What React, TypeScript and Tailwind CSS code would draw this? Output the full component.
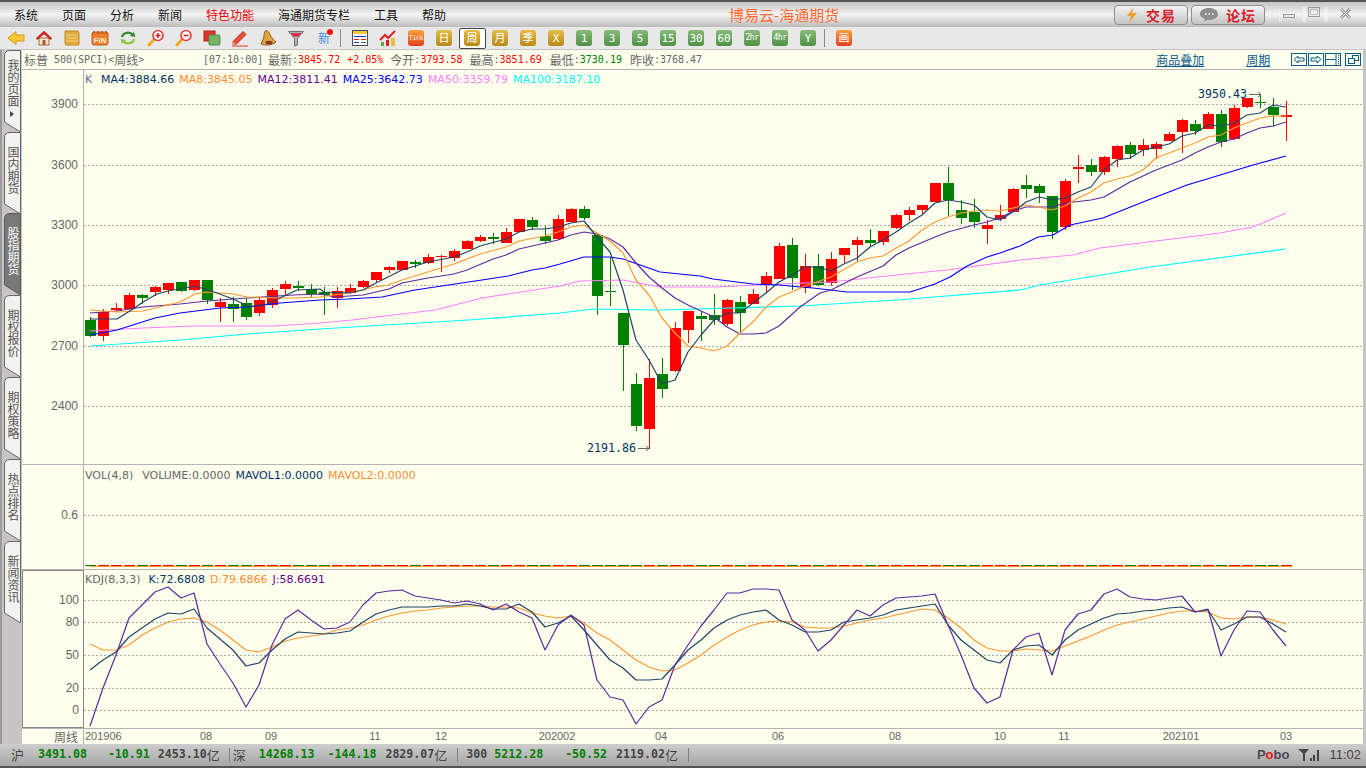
import type { ReactNode } from "react";

const mono = '"DejaVu Sans Mono", "Noto Sans CJK SC", monospace';

// top, bottom, wick top, wick bottom, 1 = red
const candles: number[][] = [
  [320,336,317,337,0],[312,336,309,341,1],[308,310,303,311,1],[295,309,293,309,1],[295,298,294,304,0],
  [287,292,286,296,1],[283,290,283,294,1],[282,291,282,292,0],[280,290,280,291,1],[280,300,280,304,0],
  [302,307,298,322,1],[304,309,297,322,0],[303,317,298,320,0],[300,313,297,316,1],[290,305,288,308,1],
  [284,289,281,295,1],[286,288,281,291,0],[289,294,284,297,0],[292,295,287,315,0],[291,298,287,308,1],
  [288,293,284,294,1],[281,287,280,288,1],[272,280,272,282,1],[267,270,266,273,1],[261,270,261,270,1],
  [262,264,260,268,0],[257,263,254,264,1],[256,257,255,272,1],[251,258,249,261,1],[241,249,240,249,1],
  [237,241,235,242,1],[237,239,233,244,0],[232,243,228,243,1],[219,232,219,232,1],[220,227,217,230,0],
  [236,241,226,244,0],[219,239,215,240,1],[209,222,208,222,1],[209,218,206,220,0],[235,296,235,315,0],
  [291,292,257,306,0],[313,345,313,391,0],[384,426,373,431,0],[378,429,359,449,1],[374,389,358,398,0],
  [328,371,322,372,1],[311,330,311,343,1],[316,319,311,341,0],[315,320,294,325,0],[300,324,299,326,1],
  [302,313,296,333,0],[294,304,289,304,1],[276,284,272,292,1],[246,279,243,279,1],[245,278,238,290,0],
  [266,288,254,293,1],[266,285,254,286,0],[259,283,252,286,1],[248,255,248,263,1],[240,245,237,261,1],
  [240,243,229,246,0],[231,242,231,245,1],[215,228,214,229,1],[210,215,207,221,1],[205,210,205,215,1],
  [183,202,183,202,1],[183,200,167,216,0],[210,218,200,224,0],[212,222,199,228,0],[225,229,220,244,1],
  [215,219,205,221,1],[189,212,188,212,1],[185,189,175,198,0],[186,193,184,203,0],[196,232,196,239,0],
  [181,227,179,230,1],[167,169,155,183,1],[165,172,159,176,0],[157,172,156,175,1],[146,159,145,167,1],
  [145,154,142,159,0],[145,150,139,156,1],[144,149,142,159,1],[134,141,132,141,1],[120,132,119,153,1],
  [124,131,120,135,0],[114,129,112,129,1],[114,142,110,147,0],[108,139,105,140,1],[98,107,98,108,1],
  [102,103,94,108,0],[107,115,98,127,0],[115,117,101,141,1],
];

const ma4 = "90,319 117,319 133,309 143,302 157,294 168,291 195,286 217,293 233,299 250,307 267,304 280,298 297,290 320,289 324,292 348,293 363,290 376,283 402,270 428,262 454,257 467,252 480,246 506,239 519,232 532,229 545,229 558,227 571,223 584,221 597,237 610,252 623,290 636,340 649,360 662,384 675,380 688,352 701,335 714,320 727,313 740,313 753,303 766,293 779,282 792,275 805,267 818,267 831,271 844,264 857,258 870,247 883,240 896,232 909,223 922,215 935,203 948,200 961,202 974,205 987,217 1000,220 1013,212 1026,202 1039,197 1052,200 1065,198 1078,192 1091,187 1104,170 1117,160 1130,158 1143,150 1156,147 1169,144 1182,136 1195,133 1208,125 1221,126 1234,123 1247,115 1260,113 1273,105 1286,107";
const ma8 = "90,310 117,312 143,311 180,302 195,294 207,292 233,294 247,297 280,298 297,298 320,297 348,293 375,287 388,285 402,280 428,272 454,264 480,254 506,247 519,241 545,236 558,232 571,227 584,225 597,233 610,241 623,253 636,280 649,295 662,318 675,333 688,346 701,348 714,351 727,346 740,333 753,322 766,307 779,297 792,292 805,286 831,277 857,262 870,258 883,256 896,248 909,241 922,230 935,222 948,217 961,213 974,211 987,210 1000,211 1026,205 1039,207 1052,210 1065,206 1078,198 1091,192 1104,183 1117,179 1130,176 1143,170 1156,158 1169,153 1182,148 1195,143 1208,137 1221,135 1234,128 1247,123 1260,118 1273,116 1286,116";
const ma12 = "90,313 117,311 143,307 180,304 207,301 247,298 293,295 320,294 335,297 363,295 389,289 402,283 428,278 454,274 467,270 493,259 506,255 519,249 545,243 558,240 571,235 584,232 597,234 610,239 623,247 636,263 649,277 662,288 675,298 688,305 714,317 727,327 740,334 753,334 766,333 779,326 800,307 810,300 820,293 831,290 857,277 883,266 896,255 909,248 935,237 948,232 974,225 987,222 1000,218 1013,211 1026,207 1052,207 1065,203 1091,200 1104,197 1130,182 1156,170 1182,160 1195,153 1208,147 1221,142 1234,139 1247,133 1260,128 1273,126 1286,122";
const ma25 = "90,335 117,330 155,318 180,313 220,308 247,307 280,303 320,300 348,299 382,297 415,290 455,284 482,280 508,276 532,270 545,268 560,264 584,257 610,257 623,259 660,272 700,276 713,279 753,284 780,285 800,287 813,288 847,292 910,292 935,284 950,277 967,266 987,257 1000,253 1020,246 1038,237 1053,235 1070,225 1103,218 1143,202 1187,185 1207,179 1253,165 1286,156";
const ma50 = "90,331 143,328 193,326 273,326 320,323 352,320 435,310 482,298 560,286 580,281 623,280 660,287 717,287 780,284 830,282 887,276 947,270 1020,260 1073,255 1100,248 1220,233 1253,227 1286,213";
const ma100 = "90,346 180,340 247,334 320,329 468,320 560,313 593,309 660,310 800,306 897,300 1020,290 1040,285 1150,267 1286,249";

const kdjJ = "90,726 103,688 116,655 129,618 142,605 155,592 168,587 181,598 194,593 207,644 220,664 233,683 246,707 259,685 272,645 285,619 298,610 311,620 324,629 337,628 350,622 363,605 376,593 389,591 402,590 415,596 428,598 441,600 454,603 467,601 480,604 493,610 506,604 519,612 532,618 545,650 558,625 571,615 584,625 597,680 610,697 623,700 636,724 649,707 662,700 675,665 688,645 701,626 714,610 727,593 740,593 753,589 766,589 779,590 792,620 805,630 818,651 831,640 844,625 857,610 870,616 883,605 896,598 909,597 922,596 935,594 948,625 961,655 974,688 987,703 1000,697 1013,650 1026,637 1039,633 1052,675 1065,630 1078,614 1091,610 1104,594 1117,589 1130,597 1143,599 1156,600 1169,598 1182,596 1195,612 1208,609 1221,656 1234,630 1247,611 1260,612 1273,630 1286,646";
const kdjK = "90,670 103,660 116,652 129,637 142,628 155,619 168,613 181,614 194,609 207,628 220,639 233,650 246,666 259,663 272,650 285,639 298,632 311,633 324,634 337,633 350,631 363,622 376,614 389,610 402,607 415,607 428,607 441,606 454,606 467,604 480,606 493,609 506,609 519,604 532,612 545,627 558,623 571,616 584,630 597,645 610,660 623,668 636,680 649,680 662,679 675,665 688,650 701,640 714,628 727,620 740,615 753,612 766,610 779,620 792,625 805,632 818,632 831,630 844,622 857,620 870,618 883,615 896,610 909,608 922,606 935,604 948,625 961,640 974,650 987,660 1000,663 1013,650 1026,646 1039,645 1052,655 1065,640 1078,630 1091,624 1104,618 1117,614 1130,613 1143,611 1156,610 1169,608 1182,607 1195,612 1208,610 1221,630 1234,624 1247,617 1260,617 1273,624 1286,632";
const kdjD = "90,644 103,650 116,650 129,645 142,635 155,628 168,622 181,619 194,618 207,622 220,630 233,640 246,650 259,652 272,647 285,641 298,638 311,636 324,634 337,630 350,628 363,625 376,620 389,616 402,613 415,611 428,610 441,608 454,607 467,606 480,606 493,607 506,607 519,608 532,613 545,616 558,618 571,616 584,623 597,633 610,640 623,650 636,660 649,667 662,671 675,670 688,663 701,655 714,645 727,637 740,630 753,625 766,622 779,621 792,622 805,627 818,628 831,628 844,626 857,623 870,620 883,618 896,615 909,612 922,609 935,610 948,618 961,628 974,640 987,648 1000,651 1013,651 1026,649 1039,650 1052,651 1065,646 1078,641 1091,636 1104,630 1117,625 1130,622 1143,619 1156,616 1169,613 1182,611 1195,611 1208,612 1221,618 1234,619 1247,617 1260,617 1273,620 1286,624";

const legendFont = "font-['DejaVu_Sans',sans-serif] text-[11px] leading-[14px] whitespace-nowrap";

function Zh({ children, className = "" }: { children: ReactNode; className?: string }) {
  return <span className={"font-['Noto_Sans_CJK_SC',sans-serif] text-[12px] " + className}>{children}</span>;
}

function Num({ children, className = "" }: { children: ReactNode; className?: string }) {
  return <span className={"font-['DejaVu_Sans_Mono',monospace] text-[10px] " + className}>{children}</span>;
}

function Grid({ ys }: { ys: number[] }) {
  return (
    <>
      {ys.map((y) => (
        <line key={y} x1={84} x2={1363} y1={y + 0.5} y2={y + 0.5} stroke="#aaaaaa" strokeDasharray="2 2" />
      ))}
    </>
  );
}

function AxisLabels({ top, height, labels }: { top: number; height: number; labels: [string, number][] }) {
  return (
    <svg className="block" width={60} height={height} viewBox={`22 ${top} 60 ${height}`}>
      {labels.map(([t, y]) => (
        <text key={t} x={78} y={y + 4} textAnchor="end" fontSize={12} fill="#666666" fontFamily='"Liberation Sans", sans-serif'>
          {t}
        </text>
      ))}
    </svg>
  );
}

function Line({ points, color }: { points: string; color: string }) {
  return <polyline points={points} fill="none" stroke={color} strokeWidth={1.2} strokeLinejoin="round" />;
}

function MainChart() {
  return (
    <svg className="block" width={1279} height={394} viewBox="84 70 1279 394">
      <Grid ys={[104, 165, 225, 285, 346, 406]} />
      <g shapeRendering="crispEdges">
        {candles.map((c, i) => {
          const color = c[4] ? "#ff0000" : "#008000";
          return (
            <g key={i}>
              <rect x={90 + 13 * i} y={c[2]} width={1} height={c[3] - c[2]} fill={color} />
              <rect x={85 + 13 * i} y={c[0]} width={11} height={c[1] - c[0]} fill={color} />
            </g>
          );
        })}
      </g>
      <Line points={ma100} color="#00ffff" />
      <Line points={ma50} color="#ff80ff" />
      <Line points={ma25} color="#0000ff" />
      <Line points={ma12} color="#5c2a9d" />
      <Line points={ma8} color="#ff9933" />
      <Line points={ma4} color="#1f4466" />
      <text x={1198} y={98} fontSize={11.6} fill="#003366" fontFamily={mono}>3950.43</text>
      <path d="M1249 94.5H1261M1258 92l3 2.5-3 2.5" fill="none" stroke="#666666" />
      <text x={587} y={452} fontSize={11.6} fill="#003366" fontFamily={mono}>2191.86</text>
      <path d="M638 448.5H649M646 446l3 2.5-3 2.5" fill="none" stroke="#666666" />
    </svg>
  );
}

function VolChart() {
  return (
    <svg className="block" width={1279} height={104} viewBox="84 465 1279 104">
      <Grid ys={[515]} />
      <g shapeRendering="crispEdges">
        {candles.map((c, i) => (
          <rect key={i} x={85 + 13 * i} y={565} width={11} height={1} fill={c[4] ? "#ff0000" : "#008000"} />
        ))}
        <rect x={90} y={566} width={1202} height={1} fill="#ff9933" />
      </g>
    </svg>
  );
}

function KdjChart() {
  return (
    <svg className="block" width={1279} height={158} viewBox="84 570 1279 158">
      <Grid ys={[600, 622, 655, 688, 710]} />
      <Line points={kdjD} color="#ff9933" />
      <Line points={kdjK} color="#1f4466" />
      <Line points={kdjJ} color="#5c2a9d" />
    </svg>
  );
}

function Tile({ kind, children, size = "text-[11px]" }: { kind: "gold" | "green" | "red"; children: ReactNode; size?: string }) {
  const bg =
    kind === "gold"
      ? "from-[#e6bb45] to-[#b98a12]"
      : kind === "green"
        ? "from-[#86bb78] to-[#4f9145]"
        : "from-[#f7a03c] to-[#e23a20]";
  return (
    <span
      className={"flex w-[16px] h-[16px] items-center justify-center rounded-[3px] bg-linear-to-b text-white leading-none " + bg + " " + size}
      style={{ fontFamily: mono }}
    >
      {children}
    </span>
  );
}

const ico = "block w-[18px] h-[18px]";

const BackIcon = () => (
  <svg className={ico} viewBox="0 0 18 18"><path d="M1 9 9 2.5V6h8v6H9v3.5Z" fill="#f8c832" stroke="#d79a14" /></svg>
);
const HomeIcon = () => (
  <svg className={ico} viewBox="0 0 18 18">
    <path d="M4 9h10v7H4Z" fill="#f4e4cc" stroke="#a86a40" />
    <path d="M7.500 11h3v5h-3Z" fill="#a8562a" />
    <path d="M1 9.500 9 2l8 7.500-1.500 1L9 5l-6.500 5.500Z" fill="#d8241c" stroke="#a01810" strokeWidth=".5" />
  </svg>
);
const NoteIcon = () => (
  <svg className={ico} viewBox="0 0 18 18">
    <path d="M2 2h13l1 2v12H3l-1-2Z" fill="#e2aa3c" stroke="#c08a24" />
    <path d="M3 6h12M3 9h12M3 12h12" stroke="#f2d489" />
  </svg>
);
const FinIcon = () => (
  <svg className={ico} viewBox="0 0 18 18">
    <rect x="1" y="3" width="16" height="13" rx="2" fill="#ee7d2c" stroke="#c85a18" />
    <path d="M3 2v3M7 2v3M11 2v3M15 2v3" stroke="#b04a10" />
    <text x="9" y="14" textAnchor="middle" fontSize="8" fontWeight="700" fill="#fff3d0" fontFamily='"Liberation Sans", sans-serif'>FIN</text>
  </svg>
);
const RefreshIcon = () => (
  <svg className={ico} viewBox="0 0 18 18" fill="none">
    <path d="M3 8a6 5 0 0 1 11-2" stroke="#2f8a2f" strokeWidth="2.2" />
    <path d="M16.500 8 11 7l4-4Z" fill="#2f8a2f" />
    <path d="M15 10a6 5 0 0 1-11 2" stroke="#88c83c" strokeWidth="2.2" />
    <path d="M1.500 10 7 11l-4 4Z" fill="#88c83c" />
  </svg>
);
const ZoomIcon = ({ plus }: { plus?: boolean }) => (
  <svg className={ico} viewBox="0 0 18 18" fill="none">
    <path d="M7 10.500 2 16" stroke="#f0a820" strokeWidth="3" strokeLinecap="round" />
    <circle cx="11" cy="6.500" r="5" fill="#fff" stroke="#e03a3a" strokeWidth="1.600" />
    <path d="M8.500 6.500h5" stroke="#d02020" strokeWidth="1.600" />
    {plus && <path d="M11 4v5" stroke="#d02020" strokeWidth="1.600" />}
  </svg>
);
const OverlapIcon = () => (
  <svg className={ico} viewBox="0 0 18 18">
    <rect x="1" y="2" width="11" height="10" fill="#e0302a" stroke="#b02018" />
    <rect x="6" y="6" width="11" height="10" rx="1" fill="#74b264" stroke="#4f9145" />
  </svg>
);
const PenIcon = () => (
  <svg className={ico} viewBox="0 0 18 18">
    <path d="M2 12.500 12 2.500l3 3-10 10H2Z" fill="#e8503a" stroke="#c03020" />
    <path d="M2 13v2.500h3Z" fill="#f4d0a0" />
    <path d="M1 17h16" stroke="#e83020" />
  </svg>
);
const BellIcon = () => (
  <svg className={ico} viewBox="0 0 18 18">
    <path d="M7 1.500c2 0 3 2 4 4 1 2.500 4 6 6 7.500-3 3-11 4-15 2 1-3 3-5 3-8 0-3 1-5.500 2-5.500Z" fill="#dca23c" stroke="#96601c" />
    <ellipse cx="10" cy="13.500" rx="3.500" ry="1.800" fill="#8a3414" />
  </svg>
);
const FilterIcon = () => (
  <svg className={ico} viewBox="0 0 18 18">
    <path d="M1.500 2.500h15l-6 7v6.500l-3 1V9.500Z" fill="#b4b4b4" stroke="#707070" />
    <path d="M3.500 4h11l-3 3.500h-5Z" fill="#e0284a" />
  </svg>
);
const TableIcon = () => (
  <svg className={ico} viewBox="0 0 18 18">
    <rect x="1.500" y="1.500" width="15" height="15" fill="#fff" stroke="#505050" />
    <rect x="2" y="2" width="14" height="3" fill="#f0c840" />
    <path d="M3 7.500h12" stroke="#2040c0" />
    <path d="M3 10.500h5M10 10.500h5" stroke="#d02020" />
    <path d="M3 13.500h5" stroke="#2040c0" />
    <path d="M10 13.500h5" stroke="#208030" />
  </svg>
);
const TrendIcon = () => (
  <svg className={ico} viewBox="0 0 18 18" fill="none">
    <path d="M1 11 6 6l3 3 7-7" stroke="#e02020" strokeWidth="2" />
    <rect x="2" y="13" width="3" height="4" fill="#58a848" />
    <rect x="7" y="11" width="3" height="6" fill="#e02020" />
    <rect x="12" y="9" width="4" height="8" fill="#e8c040" />
  </svg>
);

function ToolItem({ children, selected }: { children: ReactNode; selected?: boolean }) {
  return (
    <div className="flex w-[28px] h-full shrink-0 items-center justify-center">
      {selected ? (
        <div className="flex w-[27px] h-[21px] items-center justify-center rounded-[2px] border border-[#444444] bg-white">{children}</div>
      ) : (
        children
      )}
    </div>
  );
}

const ToolSep = () => <div className="w-px h-[18px] ml-[2px] mr-[5px] bg-[#8c8c8c] shrink-0" />;

function Toolbar() {
  return (
    <div className="flex h-[23px] items-center pl-[2px] bg-[#e8e8e8] border-b border-[#c8c4c4]">
      <ToolItem><BackIcon /></ToolItem>
      <ToolItem><HomeIcon /></ToolItem>
      <ToolItem><NoteIcon /></ToolItem>
      <ToolItem><FinIcon /></ToolItem>
      <ToolItem><RefreshIcon /></ToolItem>
      <ToolItem><ZoomIcon plus /></ToolItem>
      <ToolItem><ZoomIcon /></ToolItem>
      <ToolItem><OverlapIcon /></ToolItem>
      <ToolItem><PenIcon /></ToolItem>
      <ToolItem><BellIcon /></ToolItem>
      <ToolItem><FilterIcon /></ToolItem>
      <ToolItem>
        <span className="relative font-['Noto_Sans_CJK_SC',sans-serif] text-[12px] leading-none text-[#4a90e0]">
          新
          <span className="absolute -top-[3px] -right-[3px] w-[6px] h-[6px] rounded-full bg-[#f01010]" />
        </span>
      </ToolItem>
      <ToolSep />
      <ToolItem><TableIcon /></ToolItem>
      <ToolItem><TrendIcon /></ToolItem>
      <ToolItem><Tile kind="red" size="text-[6.500px] tracking-[-0.3px]">Tick</Tile></ToolItem>
      <ToolItem><Tile kind="gold">日</Tile></ToolItem>
      <ToolItem selected><Tile kind="gold">周</Tile></ToolItem>
      <ToolItem><Tile kind="gold">月</Tile></ToolItem>
      <ToolItem><Tile kind="gold">季</Tile></ToolItem>
      <ToolItem><Tile kind="gold">X</Tile></ToolItem>
      <ToolItem><Tile kind="green">1</Tile></ToolItem>
      <ToolItem><Tile kind="green">3</Tile></ToolItem>
      <ToolItem><Tile kind="green">5</Tile></ToolItem>
      <ToolItem><Tile kind="green">15</Tile></ToolItem>
      <ToolItem><Tile kind="green">30</Tile></ToolItem>
      <ToolItem><Tile kind="green">60</Tile></ToolItem>
      <ToolItem><Tile kind="green" size="text-[8px] tracking-[-0.5px]">2hr</Tile></ToolItem>
      <ToolItem><Tile kind="green" size="text-[8px] tracking-[-0.5px]">4hr</Tile></ToolItem>
      <ToolItem><Tile kind="green">Y</Tile></ToolItem>
      <ToolSep />
      <ToolItem><Tile kind="red">画</Tile></ToolItem>
    </div>
  );
}

function TitleButton({ icon, label }: { icon: ReactNode; label: string }) {
  return (
    <div className="flex w-[74px] h-[20px] items-center justify-center gap-[8px] rounded-[4px] border border-[#8e8e8e] bg-linear-to-b from-[#f4f4f4] to-[#c4c4c4]">
      {icon}
      <span className="font-['Noto_Sans_CJK_SC',sans-serif] text-[14px] font-bold tracking-[1px] leading-none text-[#d8202c]">{label}</span>
    </div>
  );
}

function MenuBar() {
  const items = ["系统", "页面", "分析", "新闻", "特色功能", "海通期货专栏", "工具", "帮助"];
  return (
    <div className="flex h-[27px] items-center border-t-2 border-[#555555] bg-linear-to-b from-[#c4c4c4] via-[#f4f4f4] to-[#bcbcbc]">
      <div className="flex w-[729px] shrink-0 gap-[24px] pl-[14px]">
        {items.map((m) => (
          <Zh key={m} className={m === "特色功能" ? "text-[#ee0000]" : "text-[#111111]"}>{m}</Zh>
        ))}
      </div>
      <span className="w-[385px] shrink-0 font-['Noto_Sans_CJK_SC',sans-serif] text-[15px] leading-none text-[#ff6a30]">博易云-海通期货</span>
      <div className="flex gap-[3px]">
        <TitleButton
          icon={<svg className="block w-[12px] h-[16px]" viewBox="0 0 12 16"><path d="M8 0 1 9h4l-2 7 8-10H6Z" fill="#f0a030" /></svg>}
          label="交易"
        />
        <TitleButton
          icon={
            <svg className="block w-[18px] h-[14px]" viewBox="0 0 18 14">
              <path d="M9 0c5 0 9 2.500 9 6s-4 6-9 6H7l-3 2 1-3C2 10 0 8 0 6c0-3.500 4-6 9-6Z" fill="#8c8c8c" />
              <path d="M5 6h1.500M8.500 6H10M12 6h1.500" stroke="#fff" strokeWidth="1.500" />
            </svg>
          }
          label="论坛"
        />
      </div>
      <svg className="block ml-[14px] w-[78px] h-[20px]" viewBox="0 0 78 20" fill="none">
        <path d="M0 2v15M24 2v15M26 2v15M46 2v15M48 2v15" stroke="#f8f8f8" />
        <rect x="4.500" y="9.500" width="11" height="3" fill="#e8e8e8" stroke="#9a9a9a" />
        <rect x="29.500" y="2.500" width="11" height="9" stroke="#9a9a9a" />
        <rect x="31.500" y="4.500" width="7" height="5" stroke="#bdbdbd" />
        <path d="M62 4l9 9M71 4l-9 9" stroke="#9a9a9a" strokeWidth="3" />
        <path d="M62 4l9 9M71 4l-9 9" stroke="#eeeeee" />
      </svg>
    </div>
  );
}

function SideTab({ label, selected, marker, first }: { label: string; selected?: boolean; marker?: boolean; first?: boolean }) {
  return (
    <div className="relative w-[17px] h-[82px] shrink-0">
      <svg className="absolute inset-0 block" width={17} height={82} viewBox="0 0 17 82">
        <path
          d="M.5 6Q.5.5 6 .5H16.500V82L.5 72Z"
          fill={selected ? "#787878" : "#f2f2ee"}
          stroke={selected ? "#5a5a5a" : "#666666"}
        />
        {marker && <path d="M6 61l4 3-4 3Z" fill="#444444" />}
      </svg>
      <div
        className={
          "relative flex justify-center font-['Noto_Sans_CJK_SC',sans-serif] text-[12px] leading-[16px] [writing-mode:vertical-rl] [text-orientation:upright] w-full " +
          (first ? "pt-[9px] " : "pt-[14px] ") +
          (selected ? "text-white" : "text-[#555555]")
        }
      >
        {label}
      </div>
    </div>
  );
}

function SideRail() {
  return (
    <div className="flex w-[22px] shrink-0 flex-col pl-[2px] bg-[#c8c4c4] border-l-2 border-l-[#9a9a9a] overflow-hidden">
      <SideTab label="我的页面" marker first />
      <SideTab label="国内期货" />
      <div className="-mt-px"><SideTab label="股指期货" selected /></div>
      <SideTab label="期权报价" />
      <SideTab label="期权策略" />
      <SideTab label="热点排名" />
      <SideTab label="新闻资讯" />
    </div>
  );
}

function InfoRow() {
  return (
    <div className="flex h-[20px] items-center border-b border-[#b4b4b4] bg-[#ffffee] pl-[2px] text-[#666666] whitespace-nowrap">
      <div className="flex w-[179px] shrink-0 items-center">
        <Zh>标普</Zh>
        <Num className="ml-[6px]">500(SPCI)&lt;</Num>
        <Zh>周线</Zh>
        <Num>&gt;</Num>
      </div>
      <Num className="w-[65px] shrink-0">[07:10:00]</Num>
      <Zh>最新</Zh><Num>:</Num>
      <Num className="text-[#ff0000]">3845.72</Num>
      <Num className="ml-[7px] text-[#ff0000]">+2.05%</Num>
      <Zh className="ml-[7px]">今开</Zh><Num>:</Num>
      <Num className="text-[#ff0000]">3793.58</Num>
      <Zh className="ml-[7px]">最高</Zh><Num>:</Num>
      <Num className="text-[#ff0000]">3851.69</Num>
      <Zh className="ml-[8px]">最低</Zh><Num>:</Num>
      <Num className="text-[#008000]">3730.19</Num>
      <Zh className="ml-[8px]">昨收</Zh><Num>:</Num>
      <Num>3768.47</Num>
      <Zh className="ml-[454px] underline text-[#0a5a8a]">商品叠加</Zh>
      <Zh className="ml-[42px] underline text-[#0a5a8a]">周期</Zh>
      <svg className="block ml-[21px] w-[70px] h-[14px]" viewBox="0 0 70 14" fill="none" stroke="#0a5a8a">
        <rect x=".5" y=".5" width="15" height="12" />
        <path d="M3 6.500 7 3v2h6v3H7v2Z" />
        <rect x="17.500" y=".5" width="15" height="12" />
        <path d="M30 6.500 26 3v2h-6v3h6v2Z" />
        <rect x="34.500" y=".5" width="15" height="12" />
        <path d="M34.500 6.500h10M45 .5v12" />
        <path d="M47.500 2v9" strokeDasharray="1 1" />
        <rect x="54.500" y=".5" width="15" height="12" />
        <rect x="61.500" y="2.500" width="6" height="5" />
        <rect x="57.500" y="5.500" width="6" height="5" fill="#ffffee" />
      </svg>
    </div>
  );
}

function TimeAxis() {
  const ticks: [string, number][] = [
    ["08", 206], ["09", 271], ["11", 375], ["12", 441], ["202002", 557], ["04", 661], ["06", 778], ["08", 895], ["10", 1000], ["11", 1064], ["202101", 1181], ["03", 1286],
  ];
  return (
    <div className="flex h-[15px] bg-[#ffffee]">
      <div className="flex w-[62px] shrink-0 justify-end pr-[5px] border-r border-[#b0b0b0]">
        <Zh className="leading-[15px] text-[#666666]">周线</Zh>
      </div>
      <svg className="block" width={1279} height={15} viewBox="84 729 1279 15">
        <text x={85} y={740} fontSize={11} fill="#666666" fontFamily='"Liberation Sans", sans-serif'>201906</text>
        {ticks.map(([t, x], i) => (
          <text key={i} x={x} y={740} textAnchor="middle" fontSize={11} fill="#666666" fontFamily='"Liberation Sans", sans-serif'>{t}</text>
        ))}
      </svg>
    </div>
  );
}

function StatusBar() {
  const q = "font-['DejaVu_Sans_Mono',monospace] text-[11.6px] font-bold text-[#008000]";
  const v = "font-['DejaVu_Sans_Mono',monospace] text-[11.6px] text-[#444444] font-bold";
  const z = "font-['Noto_Sans_CJK_SC',sans-serif] text-[13px] text-[#444444]";
  const sep = "w-px h-[14px] bg-[#808080]";
  return (
    <div className="flex h-[24px] items-center border-b-2 border-[#555555] bg-linear-to-b from-[#cdcdcd] to-[#a6a6a6] pl-[11px] whitespace-nowrap">
      <span className={z}>沪</span>
      <span className={q + " ml-[14px]"}>3491.08</span>
      <span className={q + " ml-[21px]"}>-10.91</span>
      <span className={v + " ml-[8px]"}>2453.10</span>
      <span className={z}>亿</span>
      <span className={sep + " ml-[9px]"} />
      <span className={z + " ml-[3px]"}>深</span>
      <span className={q + " ml-[13px]"}>14268.13</span>
      <span className={q + " ml-[13px]"}>-144.18</span>
      <span className={v + " ml-[9px]"}>2829.07</span>
      <span className={z}>亿</span>
      <span className={sep + " ml-[10px]"} />
      <span className={v + " ml-[8px]"}>300</span>
      <span className={q + " ml-[7px]"}>5212.28</span>
      <span className={q + " ml-[22px]"}>-50.52</span>
      <span className={v + " ml-[9px]"}>2119.02</span>
      <span className={z}>亿</span>
      <span className={sep + " ml-[10px]"} />
      <span className="ml-auto font-['Liberation_Sans',sans-serif] text-[13px] font-bold text-[#4a4a55]">
        P<span className="text-[#ee1111]">o</span>bo
      </span>
      <svg className="block ml-[9px] w-[22px] h-[14px]" viewBox="0 0 22 14">
        <path d="M0 1h11L7 5.500V13H5V5.500Z" fill="#444444" />
        <rect x="12" y="10" width="2" height="3" fill="#444444" />
        <rect x="15" y="7" width="2" height="6" fill="#444444" />
        <rect x="19" y="2" width="2" height="11" fill="#444444" />
      </svg>
      <span className="ml-[9px] mr-[5px] font-['Liberation_Sans',sans-serif] text-[13px] text-[#444444]">11:02</span>
    </div>
  );
}

export default function App() {
  return (
    <div className="flex h-[768px] w-[1366px] flex-col overflow-hidden bg-[#c4c4c4]">
      <MenuBar />
      <Toolbar />
      <div className="flex flex-1 min-h-0">
        <SideRail />
        <div className="w-[1341px] shrink-0">
          <InfoRow />
          {/* price pane */}
          <div className="flex h-[395px] border-b border-[#b4b4b4] bg-[#ffffee]">
            <div className="w-[62px] shrink-0 border-r border-[#b0b0b0]">
              <AxisLabels top={70} height={394} labels={[["3900", 104], ["3600", 165], ["3300", 225], ["3000", 285], ["2700", 346], ["2400", 406]]} />
            </div>
            <div className="relative">
              <div className={"absolute left-[1px] top-[3px] flex gap-[5px] " + legendFont}>
                <span className="w-[11px] text-[#666699]">K</span>
                <span className="text-[#003366]">MA4:3884.66</span>
                <span className="text-[#ff8c33]">MA8:3845.05</span>
                <span className="text-[#660099]">MA12:3811.41</span>
                <span className="text-[#0000ff]">MA25:3642.73</span>
                <span className="text-[#ff80ff]">MA50:3359.79</span>
                <span className="text-[#00ffff]">MA100:3187.10</span>
              </div>
              <MainChart />
            </div>
          </div>
          {/* volume pane */}
          <div className="flex h-[105px] border-b border-[#b4b4b4] bg-[#ffffee]">
            <div className="w-[62px] shrink-0 border-r border-[#b0b0b0]">
              <AxisLabels top={465} height={104} labels={[["0.6", 515]]} />
            </div>
            <div className="relative">
              <div className={"absolute left-[1px] top-[4px] flex gap-[5px] " + legendFont}>
                <span className="text-[#666666] mr-[4px]">VOL(4,8)</span>
                <span className="text-[#666666]">VOLUME:0.0000</span>
                <span className="text-[#003366]">MAVOL1:0.0000</span>
                <span className="text-[#ff8c33]">MAVOL2:0.0000</span>
              </div>
              <VolChart />
            </div>
          </div>
          {/* kdj pane */}
          <div className="flex h-[159px] border-b border-[#b4b4b4] bg-[#ffffee]">
            <div className="w-[62px] shrink-0 border border-[#888888]">
              <AxisLabels top={571} height={156} labels={[["100", 600], ["80", 622], ["50", 655], ["20", 688], ["0", 710]]} />
            </div>
            <div className="relative">
              <div className={"absolute left-[1px] top-[3px] flex gap-[5px] " + legendFont}>
                <span className="text-[#666666] mr-[3px]">KDJ(8,3,3)</span>
                <span className="text-[#003366]">K:72.6808</span>
                <span className="text-[#ff8c33]">D:79.6866</span>
                <span className="text-[#660099]">J:58.6691</span>
              </div>
              <KdjChart />
            </div>
          </div>
          <TimeAxis />
        </div>
      </div>
      <StatusBar />
    </div>
  );
}
